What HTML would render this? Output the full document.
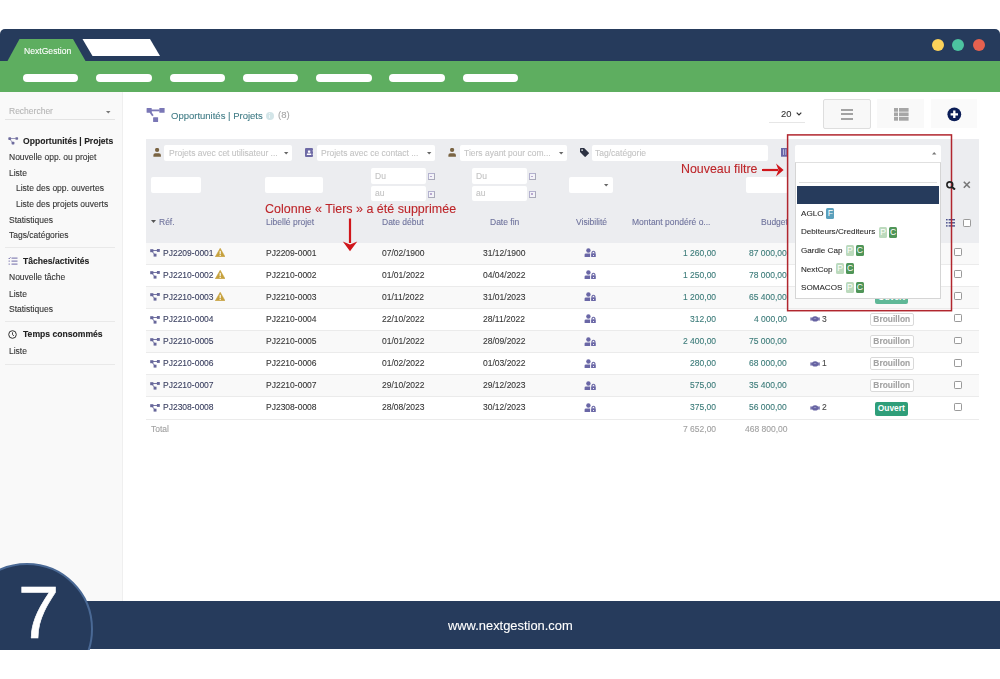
<!DOCTYPE html>
<html><head><meta charset="utf-8">
<style>
html,body{margin:0;padding:0;width:1000px;height:679px;overflow:hidden;background:#fff;}
body{position:relative;font-family:"Liberation Sans",sans-serif;color:#333;}
.t,.sl,.c,.num,.hd,.ph,.brou{will-change:transform;-webkit-text-stroke:0.1px currentColor;}
.a{position:absolute;}
.t{position:absolute;line-height:1;white-space:nowrap;font-size:8.5px;}
.nav{left:0;top:29px;width:1000px;height:32px;background:#263b5c;border-radius:5px 5px 0 0;}
.green{left:0;top:60.5px;width:1000px;height:31.5px;background:#5eae60;}
.pill{position:absolute;top:74px;height:7.5px;width:55.5px;background:#fff;border-radius:4px;}
.dot{position:absolute;top:38.9px;width:12px;height:12px;border-radius:50%;}
.side{left:0;top:92px;width:122px;height:509px;background:#f9f9f9;border-right:1px solid #efefef;}
.sl{position:absolute;line-height:1;white-space:nowrap;font-size:8.5px;color:#333;left:8.5px;}
.sep{position:absolute;left:5px;width:110px;height:1px;background:#e9e9e9;}

.inp{position:absolute;background:#fff;border-radius:2px;}
.ph{position:absolute;line-height:1;white-space:nowrap;font-size:8.5px;color:#c3c3c3;}
.hd{position:absolute;line-height:1;white-space:nowrap;font-size:8.5px;color:#6e729c;top:217.6px;}
.row{position:absolute;left:146px;width:833px;height:21px;border-bottom:1px solid #ebebeb;}
.c{position:absolute;line-height:1;white-space:nowrap;font-size:8.5px;color:#363636;}
.num{position:absolute;line-height:1;white-space:nowrap;font-size:8.5px;color:#3a7a78;text-align:right;}
.ref{color:#3b4060;}
.cal{position:absolute;width:5.2px;height:4.6px;border:0.9px solid #b3b1cf;border-right-color:#a9a9b9;border-bottom-color:#a9a9b9;background:#f3f3f8;}
.cal:after{content:"";position:absolute;left:1.7px;top:1.4px;width:1.8px;height:1.6px;background:#b9a8cf;}
.cb{position:absolute;width:5.9px;height:5.9px;border:0.75px solid #9a9a9a;border-radius:1.2px;background:#fff;}
.brou{position:absolute;left:870px;width:41.5px;height:11px;border:1px solid #d9d9d9;border-radius:2px;font-weight:bold;color:#a3a3a3;font-size:8.4px;line-height:11px;text-align:center;background:#fff;}
</style></head>
<body>
<!-- top navigation -->
<div class="a nav"></div>
<div class="a green"></div>
<svg class="a" style="left:0;top:0" width="200" height="70">
  <polygon points="7.5,61 19.5,39 73,39 85.5,61" fill="#5eae60"/>
  <polygon points="82.5,39 150,39 160,56 92.5,56" fill="#fff"/>
</svg>
<div class="t" style="left:23.5px;top:47.2px;font-size:8.6px;color:#fff;">NextGestion</div>
<div class="pill" style="left:22.5px"></div>
<div class="pill" style="left:96px"></div>
<div class="pill" style="left:169.5px"></div>
<div class="pill" style="left:242.8px"></div>
<div class="pill" style="left:316px"></div>
<div class="pill" style="left:389.2px"></div>
<div class="pill" style="left:462.5px"></div>
<div class="dot" style="left:932px;background:#fcd25a"></div>
<div class="dot" style="left:952.2px;background:#4cc3a0"></div>
<div class="dot" style="left:973px;background:#e6614f"></div>

<!-- sidebar -->
<div class="a side"></div>

<div class="t" style="left:8.5px;top:107.40px;color:#b5b5b5;">Rechercher</div>
<svg class="a" style="left:106px;top:110.50px" width="5" height="3"><polygon points="0,0 4.5,0 2.25,2.6" fill="#777"/></svg>
<div class="a" style="left:5px;top:119.00px;width:110px;height:1px;background:#e3e3e3"></div>

<svg class="a" style="left:7px;top:135.50px" width="12" height="9" viewBox="0 0 12 9"><rect x="1.3" y="1.3" width="2.8" height="2.6" rx="0.7" fill="#6e6c9e"/><rect x="8.3" y="1.2" width="2.8" height="2.6" rx="0.7" fill="#6e6c9e"/><rect x="4.6" y="5.8" width="2.8" height="2.6" rx="0.7" fill="#6e6c9e"/><path d="M4 2.5 H8.4 M3.2 3.6 L5.3 6.2" stroke="#6e6c9e" stroke-width="0.7"/></svg>
<div class="t" style="left:22.5px;top:136.70px;font-weight:bold;color:#222;font-size:8.6px;">Opportunités | Projets</div>
<div class="sl" style="top:152.50px;">Nouvelle opp. ou projet</div>
<div class="sl" style="top:168.60px;">Liste</div>
<div class="sl" style="top:183.80px;left:15.5px;">Liste des opp. ouvertes</div>
<div class="sl" style="top:199.50px;left:15.5px;">Liste des projets ouverts</div>
<div class="sl" style="top:215.50px;">Statistiques</div>
<div class="sl" style="top:230.60px;">Tags/catégories</div>
<div class="sep" style="top:247.00px"></div>

<svg class="a" style="left:8px;top:256.60px" width="10" height="8" viewBox="0 0 10 8">
  <path d="M0.5 1 L1.3 1.8 L2.5 0.3" stroke="#6f6aa8" stroke-width="0.9" fill="none"/>
  <rect x="3.5" y="0.6" width="6" height="1" fill="#6f6aa8"/>
  <rect x="3.5" y="3.6" width="6" height="1" fill="#6f6aa8"/>
  <rect x="3.5" y="6.6" width="6" height="1" fill="#6f6aa8"/>
  <rect x="0.6" y="3.6" width="1.2" height="1" fill="#6f6aa8"/><rect x="0.6" y="6.6" width="1.2" height="1" fill="#6f6aa8"/>
</svg>
<div class="t" style="left:22.5px;top:256.50px;font-weight:bold;color:#222;font-size:8.6px;">Tâches/activités</div>
<div class="sl" style="top:273.35px;">Nouvelle tâche</div>
<div class="sl" style="top:289.60px;">Liste</div>
<div class="sl" style="top:305.30px;">Statistiques</div>
<div class="sep" style="top:320.95px"></div>

<svg class="a" style="left:8px;top:329.95px" width="10" height="10" viewBox="0 0 10 10">
  <circle cx="4.5" cy="4.5" r="3.8" stroke="#333" stroke-width="1" fill="none"/>
  <path d="M4.5 2.3 V4.7 L6 5.8" stroke="#333" stroke-width="0.9" fill="none"/>
</svg>
<div class="t" style="left:22.5px;top:330.45px;font-weight:bold;color:#222;font-size:8.6px;">Temps consommés</div>
<div class="sl" style="top:346.50px;">Liste</div>
<div class="sep" style="top:363.75px"></div>

<!-- title -->
<svg class="a" style="left:142px;top:103.00px" width="30" height="24" viewBox="0 0 30 24">
  <rect x="4.6" y="5" width="5.1" height="4.7" rx="0.5" fill="#7a77b6"/><rect x="17.3" y="5" width="5.3" height="4.7" rx="0.5" fill="#7a77b6"/><rect x="11.1" y="14.3" width="5" height="4.8" rx="0.5" fill="#7a77b6"/>
  <path d="M8 7.4 H17.5" stroke="#7a77b6" stroke-width="1.8"/><path d="M8.3 9 L10.9 12.8" stroke="#7a77b6" stroke-width="1.8"/>
</svg>
<div class="t" style="left:170.6px;top:110.50px;font-size:9.5px;color:#417c86;">Opportunités | Projets</div>
<div class="a" style="left:265.6px;top:111.60px;width:8px;height:8px;border-radius:50%;background:#d3e5e8;"></div>
<div class="a" style="left:269px;top:113.30px;width:1.2px;height:1px;background:#eef6f7"></div>
<div class="a" style="left:269px;top:115.00px;width:1.2px;height:3px;background:#eef6f7"></div>
<div class="t" style="left:278px;top:110.40px;font-size:9.5px;color:#a5a5a5;">(8)</div>

<div class="t" style="left:780.5px;top:109.40px;font-size:9.4px;color:#333;">20</div>
<svg class="a" style="left:796px;top:112.00px" width="6" height="4"><path d="M0.7 0.7 L3 3 L5.3 0.7" stroke="#333" stroke-width="1.2" fill="none"/></svg>
<div class="a" style="left:768.7px;top:121.60px;width:36px;height:1px;background:#e6e6e6"></div>

<div class="a" style="left:823.2px;top:99.40px;width:45.5px;height:27.4px;border:1px solid #dedede;border-radius:2px;background:#f8f8f8;"></div>
<div class="a" style="left:840.5px;top:108.80px;width:12.6px;height:1.8px;background:#a3a3a3"></div>
<div class="a" style="left:840.5px;top:113.30px;width:12.6px;height:1.8px;background:#a3a3a3"></div>
<div class="a" style="left:840.5px;top:117.80px;width:12.6px;height:1.8px;background:#a3a3a3"></div>
<div class="a" style="left:877.3px;top:99.40px;width:46.5px;height:29px;background:#f9f9f9;"></div>
<svg class="a" style="left:893.6px;top:107.80px" width="15" height="13" viewBox="0 0 15 13">
  <rect x="0" y="0" width="4" height="3.7" fill="#a6a6a6"/><rect x="5" y="0" width="9.6" height="3.7" fill="#a6a6a6"/>
  <rect x="0" y="4.5" width="4" height="3.7" fill="#a6a6a6"/><rect x="5" y="4.5" width="9.6" height="3.7" fill="#a6a6a6"/>
  <rect x="0" y="9" width="4" height="3.7" fill="#a6a6a6"/><rect x="5" y="9" width="9.6" height="3.7" fill="#a6a6a6"/>
</svg>
<div class="a" style="left:930.7px;top:99.40px;width:46.6px;height:29px;background:#fafafa;"></div>
<svg class="a" style="left:947px;top:107.00px" width="15" height="15" viewBox="0 0 15 15">
  <circle cx="7.3" cy="7.3" r="6.9" fill="#0b1d57"/>
  <path d="M7.3 3.6 V11 M3.6 7.3 H11" stroke="#fff" stroke-width="2.3"/>
</svg>

<!-- filter area -->
<div class="a" style="left:146px;top:139.00px;width:833px;height:103.5px;background:#ecedf0;"></div>
<svg class="a" style="left:152.5px;top:148.00px" width="9" height="9" viewBox="0 0 9 9"><circle cx="4.1" cy="1.9" r="2.1" fill="#7a6443"/><path d="M0.4 8.7 V7 Q0.4 5.2 2.4 5.2 H5.9 Q7.9 5.2 7.9 7 V8.7 Z" fill="#7a6443"/></svg><div class="inp" style="left:164.4px;top:145.00px;width:127.6px;height:16px;"></div><div class="ph" style="left:168.6px;top:149.00px;">Projets avec cet utilisateur ...</div><svg class="a" style="left:283.5px;top:152.00px" width="5" height="3"><polygon points="0,0 4.4,0 2.2,2.6" fill="#666"/></svg><svg class="a" style="left:305px;top:147.60px" width="9" height="10" viewBox="0 0 9 10"><rect x="0" y="0" width="8" height="9" rx="1.1" fill="#6e6aa5"/><rect x="7.6" y="2.2" width="1" height="1.3" fill="#ecedf0"/><rect x="7.6" y="5.6" width="1" height="1.3" fill="#ecedf0"/><rect x="2.9" y="2.4" width="2.4" height="2.3" rx="0.4" fill="#fff"/><rect x="1.8" y="5.6" width="4.5" height="1.3" rx="0.3" fill="#fff"/></svg><div class="inp" style="left:317px;top:145.00px;width:118px;height:16px;"></div><div class="ph" style="left:320.6px;top:149.00px;">Projets avec ce contact ...</div><svg class="a" style="left:427.4px;top:152.00px" width="5" height="3"><polygon points="0,0 4.4,0 2.2,2.6" fill="#666"/></svg><svg class="a" style="left:447.5px;top:148.00px" width="9" height="9" viewBox="0 0 9 9"><circle cx="4.1" cy="1.9" r="2.1" fill="#7a6443"/><path d="M0.4 8.7 V7 Q0.4 5.2 2.4 5.2 H5.9 Q7.9 5.2 7.9 7 V8.7 Z" fill="#7a6443"/></svg><div class="inp" style="left:460px;top:145.00px;width:107px;height:16px;"></div><div class="ph" style="left:464px;top:149.00px;">Tiers ayant pour com...</div><svg class="a" style="left:559px;top:152.00px" width="5" height="3"><polygon points="0,0 4.4,0 2.2,2.6" fill="#666"/></svg><svg class="a" style="left:579.8px;top:147.60px" width="10" height="10" viewBox="0 0 10.5 10.5"><path d="M0 0.8 Q0 0 0.8 0 H4.3 L9.3 5 Q9.7 5.4 9.3 5.8 L5.8 9.3 Q5.4 9.7 5 9.3 L0 4.3 Z" fill="#2c3142"/><circle cx="2.2" cy="2.2" r="0.9" fill="#ecedf0"/></svg><div class="inp" style="left:591.6px;top:145.00px;width:176px;height:16px;"></div><div class="ph" style="left:595px;top:149.00px;">Tag/catégorie</div><svg class="a" style="left:781px;top:147.9px" width="7" height="9" viewBox="0 0 7 9"><rect x="0" y="0" width="7" height="8.7" fill="#6a67a8"/><rect x="2" y="1.3" width="0.8" height="5.6" fill="#cfd0ea"/><rect x="4.4" y="1.3" width="0.8" height="5.6" fill="#cfd0ea"/></svg><div class="inp" style="left:150.5px;top:177.00px;width:50px;height:16px;"></div><div class="inp" style="left:265px;top:177.00px;width:58px;height:16px;"></div><div class="inp" style="left:371px;top:168.00px;width:55px;height:16px;"></div><div class="ph" style="left:374.5px;top:172.40px;">Du</div><div class="inp" style="left:371px;top:186.00px;width:55px;height:15px;"></div><div class="ph" style="left:374.5px;top:189.00px;">au</div><div class="cal" style="left:427.5px;top:173.40px;"></div><div class="cal" style="left:427.5px;top:191.00px;"></div><div class="inp" style="left:472px;top:168.00px;width:55px;height:16px;"></div><div class="ph" style="left:475.5px;top:172.40px;">Du</div><div class="inp" style="left:472px;top:186.00px;width:55px;height:15px;"></div><div class="ph" style="left:475.5px;top:189.00px;">au</div><div class="cal" style="left:528.5px;top:173.40px;"></div><div class="cal" style="left:528.5px;top:191.00px;"></div><div class="inp" style="left:569px;top:177.00px;width:44px;height:16px;"></div><svg class="a" style="left:603.5px;top:184.00px" width="5" height="3"><polygon points="0,0 4.4,0 2.2,2.6" fill="#666"/></svg><div class="inp" style="left:746px;top:177.00px;width:42px;height:16px;"></div><svg class="a" style="left:150.6px;top:219.80px" width="6" height="4"><polygon points="0,0 5,0 2.5,3" fill="#555"/></svg><div class="hd" style="left:158.7px;">Réf.</div><div class="hd" style="left:265.5px;">Libellé projet</div><div class="hd" style="left:382.4px;">Date début</div><div class="hd" style="left:489.6px;">Date fin</div><div class="hd" style="left:575.6px;">Visibilité</div><div class="hd" style="left:632.4px;">Montant pondéré o...</div><div class="hd" style="left:760.6px;">Budget</div><svg class="a" style="left:946px;top:218.50px" width="9" height="8" viewBox="0 0 9 8"><rect x="0" y="0" width="1.6" height="1.4" fill="#4a4f8a"/><rect x="0" y="3.1" width="1.6" height="1.4" fill="#4a4f8a"/><rect x="0" y="6.2" width="1.6" height="1.4" fill="#4a4f8a"/><rect x="2.6" y="0" width="6.4" height="1.4" fill="#4a4f8a"/><rect x="2.6" y="3.1" width="6.4" height="1.4" fill="#4a4f8a"/><rect x="2.6" y="6.2" width="6.4" height="1.4" fill="#4a4f8a"/></svg><div class="cb" style="left:963.4px;top:219.40px;"></div><div class="row" style="top:242.50px;background:#f9f9f9;"></div><svg class="a" style="left:150.4px;top:249.10px" width="10" height="8" viewBox="0 0 10 8"><rect x="0.2" y="0.2" width="3.2" height="3" fill="#66669a"/><rect x="6.9" y="0" width="2.9" height="2.9" fill="#66669a"/><rect x="3.6" y="4.7" width="2.9" height="2.9" fill="#66669a"/><path d="M3 1.5 H7 M2.4 2.8 L4.3 5" stroke="#66669a" stroke-width="0.9"/></svg><div class="c ref" style="left:162.7px;top:249px;">PJ2209-0001</div><svg class="a" style="left:214.8px;top:247.70px" width="10.4" height="9.4" viewBox="0 0 11 10"><path d="M5.5 0.3 L10.7 9.4 H0.3 Z" fill="#c6a13c" stroke="#c6a13c" stroke-width="0.6" stroke-linejoin="round"/><rect x="4.9" y="3" width="1.2" height="3.6" fill="#fff"/><rect x="4.9" y="7.3" width="1.2" height="1.2" fill="#fff"/></svg><div class="c" style="left:265.5px;top:249px;">PJ2209-0001</div><div class="c" style="left:382.2px;top:249px;">07/02/1900</div><div class="c" style="left:482.6px;top:249px;">31/12/1900</div><svg class="a" style="left:584px;top:248.00px" width="12" height="10" viewBox="0 0 12 10"><circle cx="4.4" cy="2.5" r="2.2" fill="#6a67a6"/><path d="M0.6 9.1 V6.8 Q0.6 5.5 1.9 5.5 H6.1 V9.1 Z" fill="#6a67a6"/><rect x="7.1" y="5.3" width="4.7" height="3.8" rx="0.6" fill="#6a67a6"/><path d="M8 5.5 V4.4 Q9.45 2 10.9 4.4 V5.5" stroke="#6a67a6" stroke-width="1.1" fill="none"/><rect x="9" y="7" width="1" height="0.9" fill="#fff"/></svg><div class="num" style="right:284.20000000000005px;top:249px;">1 260,00</div><div class="num" style="right:212.79999999999995px;top:249px;">87 000,00</div><div class="cb" style="left:954.3px;top:247.90px;"></div><div class="row" style="top:264.65px;background:#fff;"></div><svg class="a" style="left:150.4px;top:271.25px" width="10" height="8" viewBox="0 0 10 8"><rect x="0.2" y="0.2" width="3.2" height="3" fill="#66669a"/><rect x="6.9" y="0" width="2.9" height="2.9" fill="#66669a"/><rect x="3.6" y="4.7" width="2.9" height="2.9" fill="#66669a"/><path d="M3 1.5 H7 M2.4 2.8 L4.3 5" stroke="#66669a" stroke-width="0.9"/></svg><div class="c ref" style="left:162.7px;top:271px;">PJ2210-0002</div><svg class="a" style="left:214.8px;top:269.85px" width="10.4" height="9.4" viewBox="0 0 11 10"><path d="M5.5 0.3 L10.7 9.4 H0.3 Z" fill="#c6a13c" stroke="#c6a13c" stroke-width="0.6" stroke-linejoin="round"/><rect x="4.9" y="3" width="1.2" height="3.6" fill="#fff"/><rect x="4.9" y="7.3" width="1.2" height="1.2" fill="#fff"/></svg><div class="c" style="left:265.5px;top:271px;">PJ2210-0002</div><div class="c" style="left:382.2px;top:271px;">01/01/2022</div><div class="c" style="left:482.6px;top:271px;">04/04/2022</div><svg class="a" style="left:584px;top:270.15px" width="12" height="10" viewBox="0 0 12 10"><circle cx="4.4" cy="2.5" r="2.2" fill="#6a67a6"/><path d="M0.6 9.1 V6.8 Q0.6 5.5 1.9 5.5 H6.1 V9.1 Z" fill="#6a67a6"/><rect x="7.1" y="5.3" width="4.7" height="3.8" rx="0.6" fill="#6a67a6"/><path d="M8 5.5 V4.4 Q9.45 2 10.9 4.4 V5.5" stroke="#6a67a6" stroke-width="1.1" fill="none"/><rect x="9" y="7" width="1" height="0.9" fill="#fff"/></svg><div class="num" style="right:284.20000000000005px;top:271px;">1 250,00</div><div class="num" style="right:212.79999999999995px;top:271px;">78 000,00</div><div class="cb" style="left:954.3px;top:270.05px;"></div><div class="row" style="top:286.80px;background:#f9f9f9;"></div><svg class="a" style="left:150.4px;top:293.40px" width="10" height="8" viewBox="0 0 10 8"><rect x="0.2" y="0.2" width="3.2" height="3" fill="#66669a"/><rect x="6.9" y="0" width="2.9" height="2.9" fill="#66669a"/><rect x="3.6" y="4.7" width="2.9" height="2.9" fill="#66669a"/><path d="M3 1.5 H7 M2.4 2.8 L4.3 5" stroke="#66669a" stroke-width="0.9"/></svg><div class="c ref" style="left:162.7px;top:293px;">PJ2210-0003</div><svg class="a" style="left:214.8px;top:292.00px" width="10.4" height="9.4" viewBox="0 0 11 10"><path d="M5.5 0.3 L10.7 9.4 H0.3 Z" fill="#c6a13c" stroke="#c6a13c" stroke-width="0.6" stroke-linejoin="round"/><rect x="4.9" y="3" width="1.2" height="3.6" fill="#fff"/><rect x="4.9" y="7.3" width="1.2" height="1.2" fill="#fff"/></svg><div class="c" style="left:265.5px;top:293px;">PJ2210-0003</div><div class="c" style="left:382.2px;top:293px;">01/11/2022</div><div class="c" style="left:482.6px;top:293px;">31/01/2023</div><svg class="a" style="left:584px;top:292.30px" width="12" height="10" viewBox="0 0 12 10"><circle cx="4.4" cy="2.5" r="2.2" fill="#6a67a6"/><path d="M0.6 9.1 V6.8 Q0.6 5.5 1.9 5.5 H6.1 V9.1 Z" fill="#6a67a6"/><rect x="7.1" y="5.3" width="4.7" height="3.8" rx="0.6" fill="#6a67a6"/><path d="M8 5.5 V4.4 Q9.45 2 10.9 4.4 V5.5" stroke="#6a67a6" stroke-width="1.1" fill="none"/><rect x="9" y="7" width="1" height="0.9" fill="#fff"/></svg><div class="num" style="right:284.20000000000005px;top:293px;">1 200,00</div><div class="num" style="right:212.79999999999995px;top:293px;">65 400,00</div><div class="a" style="left:875px;top:290.60px;width:33px;height:13.4px;border-radius:2px;background:#5fb897;color:#fff;font-weight:bold;font-size:8.4px;line-height:13.4px;text-align:center;">Ouvert</div><div class="cb" style="left:954.3px;top:292.20px;"></div><div class="row" style="top:308.95px;background:#fff;"></div><svg class="a" style="left:150.4px;top:315.55px" width="10" height="8" viewBox="0 0 10 8"><rect x="0.2" y="0.2" width="3.2" height="3" fill="#66669a"/><rect x="6.9" y="0" width="2.9" height="2.9" fill="#66669a"/><rect x="3.6" y="4.7" width="2.9" height="2.9" fill="#66669a"/><path d="M3 1.5 H7 M2.4 2.8 L4.3 5" stroke="#66669a" stroke-width="0.9"/></svg><div class="c ref" style="left:162.7px;top:315px;">PJ2210-0004</div><div class="c" style="left:265.5px;top:315px;">PJ2210-0004</div><div class="c" style="left:382.2px;top:315px;">22/10/2022</div><div class="c" style="left:482.6px;top:315px;">28/11/2022</div><svg class="a" style="left:584px;top:314.45px" width="12" height="10" viewBox="0 0 12 10"><circle cx="4.4" cy="2.5" r="2.2" fill="#6a67a6"/><path d="M0.6 9.1 V6.8 Q0.6 5.5 1.9 5.5 H6.1 V9.1 Z" fill="#6a67a6"/><rect x="7.1" y="5.3" width="4.7" height="3.8" rx="0.6" fill="#6a67a6"/><path d="M8 5.5 V4.4 Q9.45 2 10.9 4.4 V5.5" stroke="#6a67a6" stroke-width="1.1" fill="none"/><rect x="9" y="7" width="1" height="0.9" fill="#fff"/></svg><div class="num" style="right:284.20000000000005px;top:315px;">312,00</div><div class="num" style="right:212.79999999999995px;top:315px;">4 000,00</div><svg class="a" style="left:809.5px;top:315.45px" width="10" height="7" viewBox="0 0 10 7"><rect x="0.4" y="2.4" width="1.4" height="3.2" fill="#6663a2"/><rect x="8.3" y="2.4" width="1.4" height="3.2" fill="#6663a2"/><ellipse cx="5.1" cy="3.9" rx="3.2" ry="2.6" fill="#6663a2"/><rect x="1.6" y="3" width="1.6" height="1.8" fill="#6663a2"/><rect x="6.9" y="3" width="1.6" height="1.8" fill="#6663a2"/><path d="M3.8 3.6 H6.2" stroke="#b7b5d6" stroke-width="0.6"/></svg><div class="c" style="left:822px;top:315px;color:#444;">3</div><div class="brou" style="top:312.65px;">Brouillon</div><div class="cb" style="left:954.3px;top:314.35px;"></div><div class="row" style="top:331.10px;background:#f9f9f9;"></div><svg class="a" style="left:150.4px;top:337.70px" width="10" height="8" viewBox="0 0 10 8"><rect x="0.2" y="0.2" width="3.2" height="3" fill="#66669a"/><rect x="6.9" y="0" width="2.9" height="2.9" fill="#66669a"/><rect x="3.6" y="4.7" width="2.9" height="2.9" fill="#66669a"/><path d="M3 1.5 H7 M2.4 2.8 L4.3 5" stroke="#66669a" stroke-width="0.9"/></svg><div class="c ref" style="left:162.7px;top:337px;">PJ2210-0005</div><div class="c" style="left:265.5px;top:337px;">PJ2210-0005</div><div class="c" style="left:382.2px;top:337px;">01/01/2022</div><div class="c" style="left:482.6px;top:337px;">28/09/2022</div><svg class="a" style="left:584px;top:336.60px" width="12" height="10" viewBox="0 0 12 10"><circle cx="4.4" cy="2.5" r="2.2" fill="#6a67a6"/><path d="M0.6 9.1 V6.8 Q0.6 5.5 1.9 5.5 H6.1 V9.1 Z" fill="#6a67a6"/><rect x="7.1" y="5.3" width="4.7" height="3.8" rx="0.6" fill="#6a67a6"/><path d="M8 5.5 V4.4 Q9.45 2 10.9 4.4 V5.5" stroke="#6a67a6" stroke-width="1.1" fill="none"/><rect x="9" y="7" width="1" height="0.9" fill="#fff"/></svg><div class="num" style="right:284.20000000000005px;top:337px;">2 400,00</div><div class="num" style="right:212.79999999999995px;top:337px;">75 000,00</div><div class="brou" style="top:334.80px;">Brouillon</div><div class="cb" style="left:954.3px;top:336.50px;"></div><div class="row" style="top:353.25px;background:#fff;"></div><svg class="a" style="left:150.4px;top:359.85px" width="10" height="8" viewBox="0 0 10 8"><rect x="0.2" y="0.2" width="3.2" height="3" fill="#66669a"/><rect x="6.9" y="0" width="2.9" height="2.9" fill="#66669a"/><rect x="3.6" y="4.7" width="2.9" height="2.9" fill="#66669a"/><path d="M3 1.5 H7 M2.4 2.8 L4.3 5" stroke="#66669a" stroke-width="0.9"/></svg><div class="c ref" style="left:162.7px;top:359px;">PJ2210-0006</div><div class="c" style="left:265.5px;top:359px;">PJ2210-0006</div><div class="c" style="left:382.2px;top:359px;">01/02/2022</div><div class="c" style="left:482.6px;top:359px;">01/03/2022</div><svg class="a" style="left:584px;top:358.75px" width="12" height="10" viewBox="0 0 12 10"><circle cx="4.4" cy="2.5" r="2.2" fill="#6a67a6"/><path d="M0.6 9.1 V6.8 Q0.6 5.5 1.9 5.5 H6.1 V9.1 Z" fill="#6a67a6"/><rect x="7.1" y="5.3" width="4.7" height="3.8" rx="0.6" fill="#6a67a6"/><path d="M8 5.5 V4.4 Q9.45 2 10.9 4.4 V5.5" stroke="#6a67a6" stroke-width="1.1" fill="none"/><rect x="9" y="7" width="1" height="0.9" fill="#fff"/></svg><div class="num" style="right:284.20000000000005px;top:359px;">280,00</div><div class="num" style="right:212.79999999999995px;top:359px;">68 000,00</div><svg class="a" style="left:809.5px;top:359.75px" width="10" height="7" viewBox="0 0 10 7"><rect x="0.4" y="2.4" width="1.4" height="3.2" fill="#6663a2"/><rect x="8.3" y="2.4" width="1.4" height="3.2" fill="#6663a2"/><ellipse cx="5.1" cy="3.9" rx="3.2" ry="2.6" fill="#6663a2"/><rect x="1.6" y="3" width="1.6" height="1.8" fill="#6663a2"/><rect x="6.9" y="3" width="1.6" height="1.8" fill="#6663a2"/><path d="M3.8 3.6 H6.2" stroke="#b7b5d6" stroke-width="0.6"/></svg><div class="c" style="left:822px;top:359px;color:#444;">1</div><div class="brou" style="top:356.95px;">Brouillon</div><div class="cb" style="left:954.3px;top:358.65px;"></div><div class="row" style="top:375.40px;background:#f9f9f9;"></div><svg class="a" style="left:150.4px;top:382.00px" width="10" height="8" viewBox="0 0 10 8"><rect x="0.2" y="0.2" width="3.2" height="3" fill="#66669a"/><rect x="6.9" y="0" width="2.9" height="2.9" fill="#66669a"/><rect x="3.6" y="4.7" width="2.9" height="2.9" fill="#66669a"/><path d="M3 1.5 H7 M2.4 2.8 L4.3 5" stroke="#66669a" stroke-width="0.9"/></svg><div class="c ref" style="left:162.7px;top:381px;">PJ2210-0007</div><div class="c" style="left:265.5px;top:381px;">PJ2210-0007</div><div class="c" style="left:382.2px;top:381px;">29/10/2022</div><div class="c" style="left:482.6px;top:381px;">29/12/2023</div><svg class="a" style="left:584px;top:380.90px" width="12" height="10" viewBox="0 0 12 10"><circle cx="4.4" cy="2.5" r="2.2" fill="#6a67a6"/><path d="M0.6 9.1 V6.8 Q0.6 5.5 1.9 5.5 H6.1 V9.1 Z" fill="#6a67a6"/><rect x="7.1" y="5.3" width="4.7" height="3.8" rx="0.6" fill="#6a67a6"/><path d="M8 5.5 V4.4 Q9.45 2 10.9 4.4 V5.5" stroke="#6a67a6" stroke-width="1.1" fill="none"/><rect x="9" y="7" width="1" height="0.9" fill="#fff"/></svg><div class="num" style="right:284.20000000000005px;top:381px;">575,00</div><div class="num" style="right:212.79999999999995px;top:381px;">35 400,00</div><div class="brou" style="top:379.10px;">Brouillon</div><div class="cb" style="left:954.3px;top:380.80px;"></div><div class="row" style="top:397.55px;background:#fff;"></div><svg class="a" style="left:150.4px;top:404.15px" width="10" height="8" viewBox="0 0 10 8"><rect x="0.2" y="0.2" width="3.2" height="3" fill="#66669a"/><rect x="6.9" y="0" width="2.9" height="2.9" fill="#66669a"/><rect x="3.6" y="4.7" width="2.9" height="2.9" fill="#66669a"/><path d="M3 1.5 H7 M2.4 2.8 L4.3 5" stroke="#66669a" stroke-width="0.9"/></svg><div class="c ref" style="left:162.7px;top:403px;">PJ2308-0008</div><div class="c" style="left:265.5px;top:403px;">PJ2308-0008</div><div class="c" style="left:382.2px;top:403px;">28/08/2023</div><div class="c" style="left:482.6px;top:403px;">30/12/2023</div><svg class="a" style="left:584px;top:403.05px" width="12" height="10" viewBox="0 0 12 10"><circle cx="4.4" cy="2.5" r="2.2" fill="#6a67a6"/><path d="M0.6 9.1 V6.8 Q0.6 5.5 1.9 5.5 H6.1 V9.1 Z" fill="#6a67a6"/><rect x="7.1" y="5.3" width="4.7" height="3.8" rx="0.6" fill="#6a67a6"/><path d="M8 5.5 V4.4 Q9.45 2 10.9 4.4 V5.5" stroke="#6a67a6" stroke-width="1.1" fill="none"/><rect x="9" y="7" width="1" height="0.9" fill="#fff"/></svg><div class="num" style="right:284.20000000000005px;top:403px;">375,00</div><div class="num" style="right:212.79999999999995px;top:403px;">56 000,00</div><svg class="a" style="left:809.5px;top:404.05px" width="10" height="7" viewBox="0 0 10 7"><rect x="0.4" y="2.4" width="1.4" height="3.2" fill="#6663a2"/><rect x="8.3" y="2.4" width="1.4" height="3.2" fill="#6663a2"/><ellipse cx="5.1" cy="3.9" rx="3.2" ry="2.6" fill="#6663a2"/><rect x="1.6" y="3" width="1.6" height="1.8" fill="#6663a2"/><rect x="6.9" y="3" width="1.6" height="1.8" fill="#6663a2"/><path d="M3.8 3.6 H6.2" stroke="#b7b5d6" stroke-width="0.6"/></svg><div class="c" style="left:822px;top:403px;color:#444;">2</div><div class="a" style="left:874.5px;top:402.35px;width:33.6px;height:13.4px;border-radius:2px;background:#2f9e79;color:#fff;font-weight:bold;font-size:8.4px;line-height:13.4px;text-align:center;">Ouvert</div><div class="cb" style="left:954.3px;top:402.95px;"></div><div class="c" style="left:151px;top:425px;color:#a0a0a0;">Total</div><div class="num" style="right:284.20000000000005px;top:425px;color:#a0a0a0;">7 652,00</div><div class="num" style="right:212.79999999999995px;top:425px;color:#a0a0a0;">468 800,00</div><div class="t" style="left:264.5px;top:203.20px;font-size:12.5px;color:#bd2529;">Colonne « Tiers » a été supprimée</div><svg class="a" style="left:340px;top:216.00px" width="20" height="40" viewBox="0 0 20 40"><path d="M10 2.5 V27" stroke="#d0161b" stroke-width="2.2"/><path d="M2.8 25.6 L10 35.3 L17.3 25.6 L10 28.5 Z" fill="#d0161b"/></svg><div class="t" style="left:681px;top:162.50px;font-size:12.4px;color:#bd2529;">Nouveau filtre</div><svg class="a" style="left:760px;top:160.00px" width="26" height="20" viewBox="0 0 26 20"><path d="M2 10 H18" stroke="#d0161b" stroke-width="2.2"/><path d="M16 3.6 L23.6 10 L16 16.4 L18.5 10 Z" fill="#d0161b"/></svg>
<svg class="a" style="left:780px;top:128.00px" width="180" height="190"><rect x="7.6" y="6.9" width="163.9" height="175.8" fill="none" stroke="#b1262e" stroke-width="1.5"/></svg>
<div class="a" style="left:795.3px;top:145.00px;width:145.5px;height:16.5px;background:#fff;border-radius:2px 2px 0 0;"></div>
<svg class="a" style="left:931.7px;top:152.30px" width="5" height="3"><polygon points="0,2.6 4.4,2.6 2.2,0" fill="#777"/></svg>
<div class="a" style="left:795px;top:161.50px;width:143.5px;height:135.6px;background:#fff;border:1px solid #d5d5d5;border-top:1px solid #e0e0e0;"></div>
<div class="a" style="left:798.7px;top:182.00px;width:138px;height:1px;background:#dedede"></div>
<div class="a" style="left:797.3px;top:186.20px;width:141.5px;height:17.8px;background:#263b5c"></div>
<div class="t" style="left:800.6px;top:210.34px;font-size:8.1px;color:#2a2a2a;">AGLO</div><div class="a" style="left:826.4px;top:208.4px;width:8px;height:11px;border-radius:1.5px;background:#5ba0bc;color:#fff;font-size:8.6px;line-height:11px;text-align:center;">F</div><div class="t" style="left:800.6px;top:228.44px;font-size:8.1px;color:#2a2a2a;">Debiteurs/Crediteurs</div><div class="a" style="left:879px;top:226.5px;width:8px;height:11px;border-radius:1.5px;background:#bcdabd;color:#fff;font-size:8.6px;line-height:11px;text-align:center;">P</div><div class="a" style="left:889.2px;top:226.5px;width:8px;height:11px;border-radius:1.5px;background:#4f9558;color:#fff;font-size:8.6px;line-height:11px;text-align:center;">C</div><div class="t" style="left:800.6px;top:246.84px;font-size:8.1px;color:#2a2a2a;">Gardie Cap</div><div class="a" style="left:845.8px;top:245px;width:8px;height:11px;border-radius:1.5px;background:#bcdabd;color:#fff;font-size:8.6px;line-height:11px;text-align:center;">P</div><div class="a" style="left:855.9px;top:245px;width:8px;height:11px;border-radius:1.5px;background:#4f9558;color:#fff;font-size:8.6px;line-height:11px;text-align:center;">C</div><div class="t" style="left:800.6px;top:265.54px;font-size:8.1px;color:#2a2a2a;">NextCop</div><div class="a" style="left:836px;top:263.3px;width:8px;height:11px;border-radius:1.5px;background:#bcdabd;color:#fff;font-size:8.6px;line-height:11px;text-align:center;">P</div><div class="a" style="left:846.1px;top:263.3px;width:8px;height:11px;border-radius:1.5px;background:#4f9558;color:#fff;font-size:8.6px;line-height:11px;text-align:center;">C</div><div class="t" style="left:800.6px;top:283.64px;font-size:8.1px;color:#2a2a2a;">SOMACOS</div><div class="a" style="left:845.8px;top:281.7px;width:8px;height:11px;border-radius:1.5px;background:#bcdabd;color:#fff;font-size:8.6px;line-height:11px;text-align:center;">P</div><div class="a" style="left:855.9px;top:281.7px;width:8px;height:11px;border-radius:1.5px;background:#4f9558;color:#fff;font-size:8.6px;line-height:11px;text-align:center;">C</div>
<svg class="a" style="left:946px;top:180.50px" width="11" height="9" viewBox="0 0 11 9"><circle cx="3.8" cy="3.8" r="2.9" stroke="#222" stroke-width="1.6" fill="none"/><path d="M6 6 L9 8.6" stroke="#222" stroke-width="2"/></svg><svg class="a" style="left:963px;top:181.00px" width="8" height="8" viewBox="0 0 8 8"><path d="M0.8 0.8 L6.8 6.8 M6.8 0.8 L0.8 6.8" stroke="#777" stroke-width="1.6"/></svg>
<div class="a" style="left:0;top:601.3px;width:1000px;height:48.2px;background:#263b5c;"></div>
<div class="a" style="left:0;top:0;width:1000px;height:649.5px;overflow:hidden;pointer-events:none;">
  <div class="a" style="left:-39.5px;top:562.6px;width:132.5px;height:132.5px;border-radius:50%;background:#263b5c;box-sizing:border-box;border:2px solid #4a6995;"></div>
</div>
<div class="t" style="left:18px;top:576.00px;font-size:74px;color:#fff;-webkit-text-stroke:0.6px #fff;">7</div>
<div class="t" style="left:448px;top:620.00px;font-size:12.9px;color:#fff;">www.nextgestion.com</div>
</body></html>
